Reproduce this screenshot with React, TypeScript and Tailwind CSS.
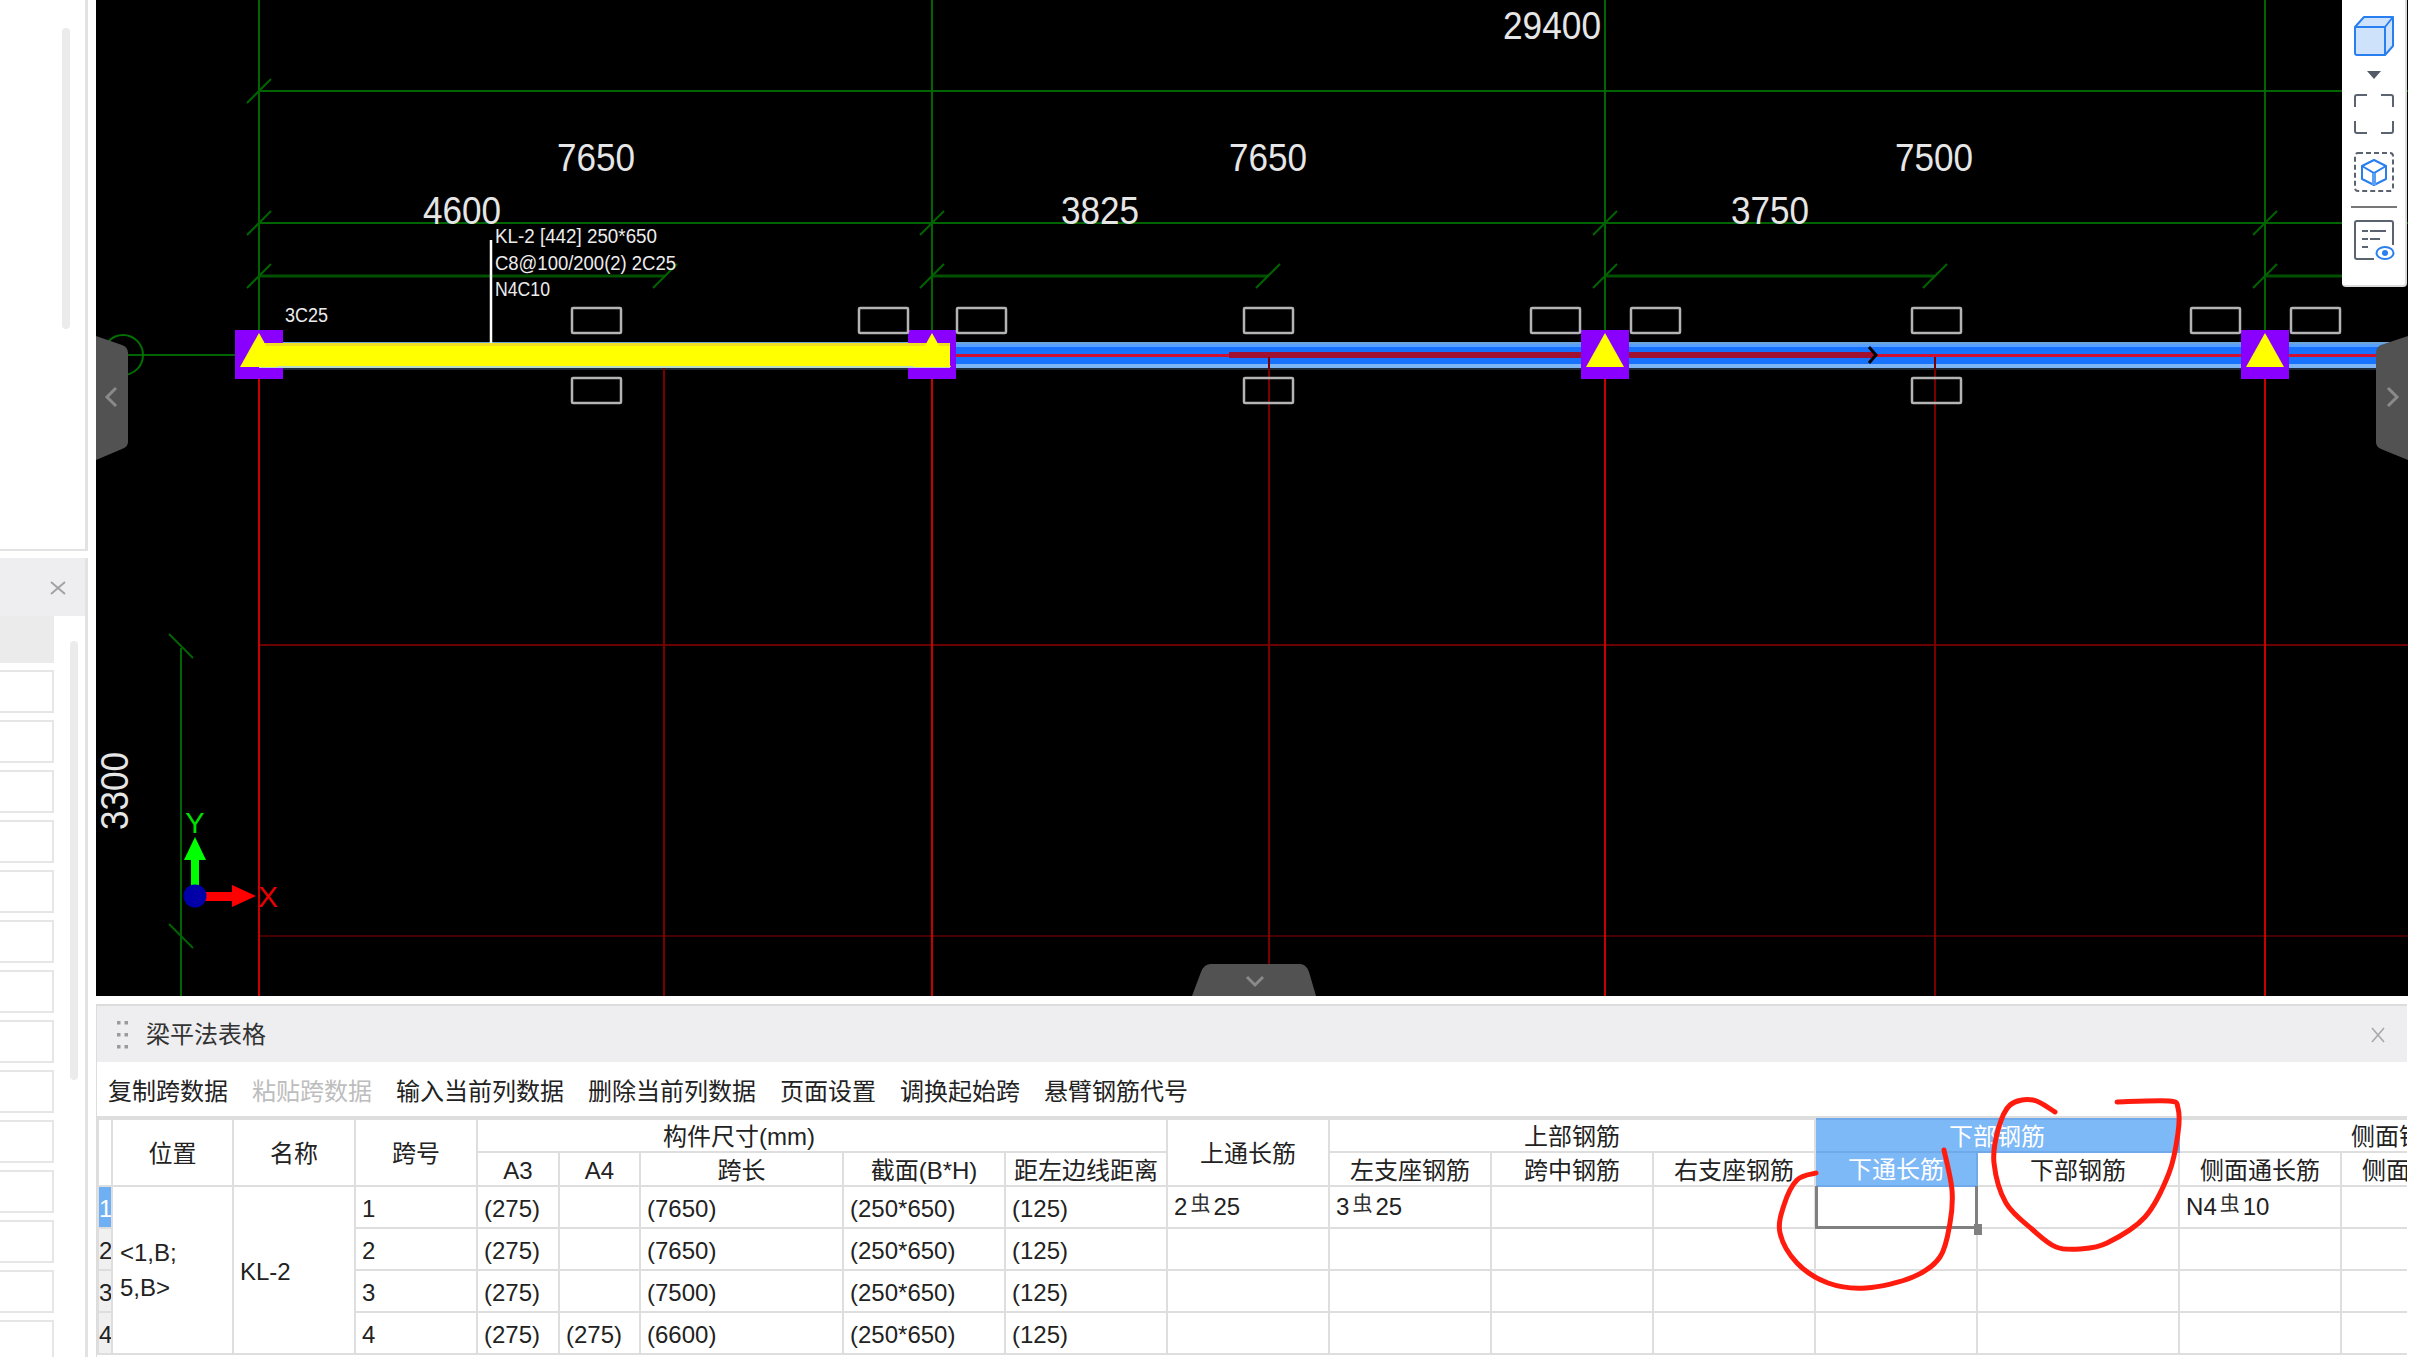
import React from "react";

const GX = [259, 932, 1605, 2265];
const DARK = [664, 1269, 1935];
const TOP_BOXES = [571, 858, 956, 1243, 1530, 1630, 1911, 2190, 2290];
const BOTTOM_BOXES = [571, 1243, 1911];
const TICK_276 = [259, 665, 932, 1268, 1605, 1935, 2265];
const COLS = [14, 121, 122, 122, 82, 81, 203, 162, 162, 162, 162, 162, 162, 162, 202, 162, 278];
const SPANS: { n: number; a3: string; a4: string; len: string }[] = [
  { n: 1, a3: "(275)", a4: "", len: "(7650)" },
  { n: 2, a3: "(275)", a4: "", len: "(7650)" },
  { n: 3, a3: "(275)", a4: "", len: "(7500)" },
  { n: 4, a3: "(275)", a4: "(275)", len: "(6600)" },
];

const LOOP_A: number[][] = [[1816, 1173], [1797, 1180], [1784, 1205], [1780, 1233], [1797, 1263], [1828, 1283], [1866, 1288], [1913, 1277], [1940, 1257], [1950, 1223], [1952, 1190], [1944, 1150]];
const LOOP_B: number[][] = [[2055, 1112], [2033, 1100], [2010, 1105], [1998, 1130], [1994, 1163], [2006, 1203], [2033, 1230], [2056, 1247], [2080, 1249], [2107, 1243], [2145, 1217], [2169, 1173], [2178, 1133], [2178, 1108], [2169, 1101], [2117, 1102]];

function smooth(p: number[][]) {
  let d = `M${p[0][0]} ${p[0][1]}`;
  for (let i = 0; i < p.length - 1; i++) {
    const a = p[Math.max(i - 1, 0)];
    const b = p[i];
    const c = p[i + 1];
    const e = p[Math.min(i + 2, p.length - 1)];
    d += ` C${b[0] + (c[0] - a[0]) / 6} ${b[1] + (c[1] - a[1]) / 6} ${c[0] - (e[0] - b[0]) / 6} ${c[1] - (e[1] - b[1]) / 6} ${c[0]} ${c[1]}`;
  }
  return d;
}

const th = "border-2 border-[#dedede] p-0 pt-[3px] text-center font-normal text-[24px] leading-none text-[#222] overflow-hidden whitespace-nowrap";
const td = "border-2 border-[#dedede] p-0 pl-[6px] pt-[3px] text-left font-normal text-[24px] leading-none text-[#222] overflow-hidden whitespace-nowrap";
const thBlue = "border-2 border-[#6fa9ea] p-0 pt-[2px] text-center font-normal text-[24px] leading-none text-white bg-[#7db8f7] overflow-hidden whitespace-nowrap";

function Tick({ x, y }: { x: number; y: number }) {
  return <line x1={x - 12} y1={y + 12} x2={x + 12} y2={y - 12} stroke="#006400" strokeWidth="2" />;
}

function Dim({ x, y, w, t }: { x: number; y: number; w: number; t: string }) {
  return (
    <text x={x} y={y} fontSize="38" textAnchor="middle" textLength={w} lengthAdjust="spacingAndGlyphs" fill="#e6e6e6">
      {t}
    </text>
  );
}

function Small({ x, y, w, t }: { x: number; y: number; w: number; t: string }) {
  return (
    <text x={x} y={y} fontSize="20" textLength={w} lengthAdjust="spacingAndGlyphs" fill="#ececec">
      {t}
    </text>
  );
}

function Column({ x }: { x: number }) {
  return <rect x={x - 24} y={330} width={48} height={49} fill="#8a00ff" />;
}

function Tri({ x }: { x: number }) {
  return <polygon points={`${x},333 ${x + 19},367 ${x - 19},367`} fill="#ffff00" />;
}

function Box({ x, y }: { x: number; y: number }) {
  return <rect x={x + 1} y={y + 1} width={49} height={25} rx="1" fill="none" stroke="#b4b4b4" strokeWidth="2.5" />;
}

function Drawing() {
  return (
    <svg viewBox="96 0 2312 996" className="block w-[2312px] h-[996px] font-['Liberation_Sans',sans-serif]">
      <rect x="96" y="0" width="2312" height="996" fill="#000" />
      <line x1="259" y1="645" x2="2408" y2="645" stroke="#6b0000" strokeWidth="2" />
      <line x1="259" y1="936" x2="2408" y2="936" stroke="#470000" strokeWidth="2" />
      {GX.map((x) => (
        <line key={x} x1={x} y1="0" x2={x} y2="332" stroke="#006400" strokeWidth="2" />
      ))}
      <line x1="259" y1="91" x2="2408" y2="91" stroke="#006400" strokeWidth="2" />
      <line x1="259" y1="223" x2="2408" y2="223" stroke="#006400" strokeWidth="2" />
      <line x1="259" y1="276" x2="665" y2="276" stroke="#005000" strokeWidth="3" />
      <line x1="932" y1="276" x2="1268" y2="276" stroke="#005000" strokeWidth="3" />
      <line x1="1605" y1="276" x2="1935" y2="276" stroke="#005000" strokeWidth="3" />
      <line x1="2265" y1="276" x2="2342" y2="276" stroke="#005000" strokeWidth="3" />
      <Tick x={259} y={91} />
      {GX.map((x) => (
        <Tick key={x} x={x} y={223} />
      ))}
      {TICK_276.map((x) => (
        <Tick key={x} x={x} y={276} />
      ))}
      <line x1="128" y1="355" x2="236" y2="355" stroke="#006400" strokeWidth="2" />
      <circle cx="123" cy="355" r="20" fill="none" stroke="#007000" strokeWidth="2" />
      <line x1="181" y1="648" x2="181" y2="996" stroke="#006400" strokeWidth="2" />
      <line x1="169" y1="634" x2="193" y2="658" stroke="#006400" strokeWidth="2" />
      <line x1="169" y1="924" x2="193" y2="948" stroke="#006400" strokeWidth="2" />
      {GX.map((x) => (
        <line key={x} x1={x} y1="379" x2={x} y2="996" stroke="#c80000" strokeWidth="2" />
      ))}
      <rect x="259" y="342" width="2149" height="2" fill="#6ca4dc" />
      <rect x="259" y="344" width="2149" height="3" fill="#58a0ff" />
      <rect x="259" y="347" width="2149" height="17" fill="#1672ff" />
      <rect x="259" y="364" width="2149" height="4" fill="#7db4f5" />
      <rect x="259" y="368" width="2149" height="2" fill="#1c2a3a" />
      <rect x="259" y="354" width="2149" height="3" fill="#d01030" />
      <rect x="1229" y="352" width="646" height="6" fill="#a01030" />
      <polyline points="1869,347 1876,355 1869,363" fill="none" stroke="#000" strokeWidth="3" />
      {DARK.map((x) => (
        <line key={x} x1={x} y1="357" x2={x} y2="996" stroke="#7a0000" strokeWidth="2" />
      ))}
      {GX.map((x) => (
        <Column key={x} x={x} />
      ))}
      <rect x="259" y="343" width="691" height="3" fill="#f2e020" />
      <rect x="259" y="346" width="691" height="20" fill="#ffff00" />
      <rect x="259" y="366" width="691" height="2" fill="#b8d8c8" />
      {GX.map((x) => (
        <Tri key={x} x={x} />
      ))}
      {TOP_BOXES.map((x) => (
        <Box key={x} x={x} y={307} />
      ))}
      {BOTTOM_BOXES.map((x) => (
        <Box key={x} x={x} y={377} />
      ))}
      <line x1="491" y1="240" x2="491" y2="343" stroke="#fff" strokeWidth="2.5" />
      <Small x={495} y={243} w={162} t="KL-2 [442] 250*650" />
      <Small x={495} y={270} w={181} t="C8@100/200(2) 2C25" />
      <Small x={495} y={296} w={55} t="N4C10" />
      <Small x={285} y={322} w={43} t="3C25" />
      <Dim x={1552} y={39} w={98} t="29400" />
      <Dim x={596} y={171} w={78} t="7650" />
      <Dim x={1268} y={171} w={78} t="7650" />
      <Dim x={1934} y={171} w={78} t="7500" />
      <Dim x={462} y={224} w={78} t="4600" />
      <Dim x={1100} y={224} w={78} t="3825" />
      <Dim x={1770} y={224} w={78} t="3750" />
      <g transform="translate(128 791) rotate(-90)">
        <Dim x={0} y={0} w={78} t="3300" />
      </g>
      <rect x="191" y="860" width="8" height="36" fill="#00ff00" />
      <polygon points="195,837 206,860 184,860" fill="#00ff00" />
      <text x="195" y="833" fontSize="29" textAnchor="middle" fill="#00e000">Y</text>
      <rect x="200" y="892" width="33" height="9" fill="#ff0000" />
      <polygon points="256,896 232,885 232,907" fill="#ff0000" />
      <circle cx="195" cy="896" r="11.5" fill="#0000a8" />
      <text x="268" y="907" fontSize="30" textAnchor="middle" fill="#e80000">X</text>
      <path d="M96 336 L122 345 Q128 347 128 353 V442 Q128 447 122 449 L96 460 Z" fill="#525252" />
      <polyline points="116,388 107,397 116,406" fill="none" stroke="#8a8a8a" strokeWidth="3" />
      <path d="M2408 336 L2381 345 Q2376 347 2376 353 V442 Q2376 447 2381 449 L2408 460 Z" fill="#525252" />
      <polyline points="2388,388 2397,397 2388,406" fill="none" stroke="#8a8a8a" strokeWidth="3" />
      <path d="M1192 996 L1201 972 Q1204 964 1211 964 H1300 Q1306 964 1309 972 L1316 996 Z" fill="#525252" />
      <polyline points="1247,977 1255,985 1263,977" fill="none" stroke="#8a8a8a" strokeWidth="3" />
    </svg>
  );
}

function CubeIcon() {
  return (
    <svg width="40" height="40" viewBox="0 0 40 40" fill="#cfe2fb" stroke="#2a7ff0" strokeWidth="2" strokeLinejoin="round">
      <path d="M1 11 L10 1 H39 V30 L31 39 H3 a2 2 0 0 1 -2 -2 Z" />
      <path d="M1 11 H31 V39 M31 11 L39 1" fill="none" />
    </svg>
  );
}

function FocusIcon() {
  return (
    <svg width="40" height="40" viewBox="0 0 40 40" fill="none" stroke="#5b6270" strokeWidth="2">
      <path d="M13 1 H3 a2 2 0 0 0 -2 2 V13 M27 1 H37 a2 2 0 0 1 2 2 V13 M13 39 H3 a2 2 0 0 1 -2 -2 V27 M27 39 H37 a2 2 0 0 0 2 -2 V27" />
    </svg>
  );
}

function DashCubeIcon() {
  return (
    <svg width="40" height="40" viewBox="0 0 40 40" fill="none">
      <rect x="1" y="1" width="38" height="38" rx="3" stroke="#5b6270" strokeWidth="2" strokeDasharray="5 3" />
      <path d="M20 8 L32 14 V27 L20 33 L8 27 V14 Z" stroke="#2a7ff0" strokeWidth="2" strokeLinejoin="round" />
      <path d="M8 14 L20 21 L32 14" stroke="#2a7ff0" strokeWidth="2" />
      <path d="M20 21 V33" stroke="#5aa0f5" strokeWidth="4" />
    </svg>
  );
}

function ListEyeIcon() {
  return (
    <svg width="42" height="42" viewBox="0 0 42 42" fill="none">
      <path d="M20 39 H3 a2 2 0 0 1 -2 -2 V3 a2 2 0 0 1 2 -2 H37 a2 2 0 0 1 2 2 V25" stroke="#5b6270" strokeWidth="2" />
      <path d="M8 11 H14 M16 11 H32 M8 19 H14 M16 19 H26 M8 27 H14" stroke="#5b6270" strokeWidth="2" />
      <ellipse cx="31" cy="33" rx="8.5" ry="6" stroke="#2a7ff0" strokeWidth="2" />
      <circle cx="31" cy="33" r="3" fill="#2a7ff0" />
    </svg>
  );
}

function ViewPanel() {
  return (
    <div className="absolute left-[2246px] top-0 w-[65px] h-[287px] bg-white rounded-b-sm border-b-2 border-r-2 border-[#dcdcdc] flex flex-col items-center pt-[16px]">
      <CubeIcon />
      <div className="mt-[15px] w-0 h-0 border-l-[7px] border-r-[7px] border-t-[8px] border-l-transparent border-r-transparent border-t-[#555b66]" />
      <div className="mt-[15px]"><FocusIcon /></div>
      <div className="mt-[18px]"><DashCubeIcon /></div>
      <div className="mt-[14px] w-[46px] h-[2px] bg-[#777]" />
      <div className="mt-[12px] ml-[2px]"><ListEyeIcon /></div>
    </div>
  );
}

function Rebar({ a, b }: { a: string; b: string }) {
  return (
    <span className="relative -top-[2px]">
      {a}
      <span className="mx-[3px] text-[20px] align-[4px] text-[#333]">虫</span>
      {b}
    </span>
  );
}

function BeamTable() {
  const blank = <td className={td} />;
  return (
    <table className="table-fixed border-collapse w-[2521px]">
      <colgroup>
        {COLS.map((w, i) => (
          <col key={i} style={{ width: w }} />
        ))}
      </colgroup>
      <thead>
        <tr className="h-[33px]">
          <th rowSpan={2} className={th} />
          <th rowSpan={2} className={th}>位置</th>
          <th rowSpan={2} className={th}>名称</th>
          <th rowSpan={2} className={th}>跨号</th>
          <th colSpan={5} className="border-2 border-[#dedede] p-0 pt-[2px] pr-[166px] text-center font-normal text-[24px] leading-none text-[#222] overflow-hidden whitespace-nowrap">构件尺寸(mm)</th>
          <th rowSpan={2} className={th}>上通长筋</th>
          <th colSpan={3} className={th}>上部钢筋</th>
          <th colSpan={2} className={thBlue}>下部钢筋</th>
          <th colSpan={2} className={th}>侧面钢筋</th>
        </tr>
        <tr className="h-[34px]">
          <th className={th}>A3</th>
          <th className={th}>A4</th>
          <th className={th}>跨长</th>
          <th className={th}>截面(B*H)</th>
          <th className={th}>距左边线距离</th>
          <th className={th}>左支座钢筋</th>
          <th className={th}>跨中钢筋</th>
          <th className={th}>右支座钢筋</th>
          <th className={thBlue}>下通长筋</th>
          <th className={th}>下部钢筋</th>
          <th className={th}>侧面通长筋</th>
          <th className="border-2 border-[#dedede] p-0 pt-[3px] pl-[20px] text-left font-normal text-[24px] leading-none text-[#222] overflow-hidden whitespace-nowrap">侧面原位标注筋</th>
        </tr>
      </thead>
      <tbody>
        {SPANS.map((s, i) => (
          <tr key={s.n} className="h-[42px]">
            <td className={i === 0 ? "border-2 border-[#dedede] p-0 pt-[3px] text-center text-[24px] leading-none bg-[#6fb0f5] text-white overflow-hidden" : "border-2 border-[#dedede] p-0 pt-[3px] text-center text-[24px] leading-none bg-[#f0f0f0] text-[#222] overflow-hidden"}>
              {s.n}
            </td>
            {i === 0 && (
              <td rowSpan={4} className="border-2 border-[#dedede] p-0 pl-[7px] text-left text-[24px] leading-[35px] text-[#222] overflow-hidden whitespace-nowrap">
                <div>&lt;1,B;</div>
                <div>5,B&gt;</div>
              </td>
            )}
            {i === 0 && <td rowSpan={4} className={td}>KL-2</td>}
            <td className={td}>{s.n}</td>
            <td className={td}>{s.a3}</td>
            <td className={td}>{s.a4}</td>
            <td className={td}>{s.len}</td>
            <td className={td}>(250*650)</td>
            <td className={td}>(125)</td>
            <td className={td}>{i === 0 && <Rebar a="2" b="25" />}</td>
            <td className={td}>{i === 0 && <Rebar a="3" b="25" />}</td>
            {blank}
            {blank}
            {i === 0 ? (
              <td className="relative border-2 border-[#dedede] p-0">
                <div className="absolute -left-px -top-px w-[163px] h-[43px] border-[3px] border-t-0 border-[#808080]" />
                <div className="absolute left-[158px] top-[37px] w-[8px] h-[11px] bg-[#808080]" />
              </td>
            ) : (
              blank
            )}
            {blank}
            <td className={td}>{i === 0 && <Rebar a="N4" b="10" />}</td>
            {blank}
          </tr>
        ))}
      </tbody>
    </table>
  );
}

const TOOLS = ["复制跨数据", "粘贴跨数据", "输入当前列数据", "删除当前列数据", "页面设置", "调换起始跨", "悬臂钢筋代号"];

function BeamPanel() {
  return (
    <div className="mt-[8px] w-[2311px] h-[353px] border-t-2 border-l border-[#dcdcdc] overflow-hidden flex flex-col">
      <div className="h-[56px] shrink-0 bg-[#eeeef0] flex items-center pl-[20px] pr-[21px] pt-[1px] text-[24px] text-[#333]">
        <svg width="11" height="28" viewBox="0 0 11 28" fill="#9a9a9a" className="shrink-0">
          <rect x="0" y="0" width="3.5" height="3.5" /><rect x="7.5" y="0" width="3.5" height="3.5" />
          <rect x="0" y="12" width="3.5" height="3.5" /><rect x="7.5" y="12" width="3.5" height="3.5" />
          <rect x="0" y="24" width="3.5" height="3.5" /><rect x="7.5" y="24" width="3.5" height="3.5" />
        </svg>
        <span className="ml-[18px]">梁平法表格</span>
        <svg width="16" height="16" viewBox="0 0 16 16" className="ml-auto" stroke="#a8a8a8" strokeWidth="1.6">
          <path d="M2 1 L14 15 M14 1 L2 15" />
        </svg>
      </div>
      <div className="h-[56px] shrink-0 border-b-2 border-[#dedede] flex items-center gap-6 pl-[11px] pt-[6px] text-[24px] leading-none text-[#222]">
        {TOOLS.map((t, i) => (
          <span key={t} className={i === 1 ? "text-[#bdbdbd]" : ""}>{t}</span>
        ))}
      </div>
      <BeamTable />
    </div>
  );
}

const ROWS = Array.from({ length: 14 }, (_, i) => i);

function Sidebar() {
  return (
    <div className="w-[96px] shrink-0 h-[1357px] overflow-hidden">
      <div className="relative w-[88px] h-[551px] border-r-[3px] border-b-[2px] border-[#e2e2e2]">
        <div className="absolute left-[62px] top-[28px] w-[8px] h-[301px] rounded-sm bg-[#ebebeb]" />
      </div>
      <div className="relative mt-[7px] w-[88px] h-[799px] border-r-[3px] border-[#e2e2e2]">
        <div className="h-[58px] bg-[#eeeef0] flex items-center justify-end pr-[19px] pt-[2px]">
          <svg width="16" height="14" viewBox="0 0 16 14" stroke="#a0a0a0" strokeWidth="1.8">
            <path d="M1 1 L15 13 M15 1 L1 13" />
          </svg>
        </div>
        <div className="w-[54px] h-[47px] bg-[#ebebeb]" />
        <div className="flex flex-col gap-[7px] mt-[7px]">
          {ROWS.map((r) => (
            <div key={r} className="w-[54px] h-[43px] shrink-0 border-2 border-l-0 border-[#e6e6e6]" />
          ))}
        </div>
        <div className="absolute left-[70px] top-[83px] w-[8px] h-[439px] rounded-sm bg-[#ebebeb]" />
      </div>
    </div>
  );
}

function Annotations() {
  return (
    <svg className="absolute left-0 top-0 w-[2415px] h-[1357px] pointer-events-none" viewBox="0 0 2415 1357" fill="none" stroke="#ff1c0e" strokeWidth="5" strokeLinecap="round" strokeLinejoin="round">
      <path d={smooth(LOOP_A)} />
      <path d={smooth(LOOP_B)} />
    </svg>
  );
}

export default function App() {
  return (
    <div className="relative w-[2415px] h-[1357px] overflow-hidden bg-white flex font-['Liberation_Sans','Noto_Sans_CJK_SC',sans-serif]">
      <Sidebar />
      <div className="flex-1 flex flex-col">
        <div className="relative w-[2312px] h-[996px] shrink-0">
          <Drawing />
          <ViewPanel />
        </div>
        <BeamPanel />
      </div>
      <Annotations />
    </div>
  );
}
